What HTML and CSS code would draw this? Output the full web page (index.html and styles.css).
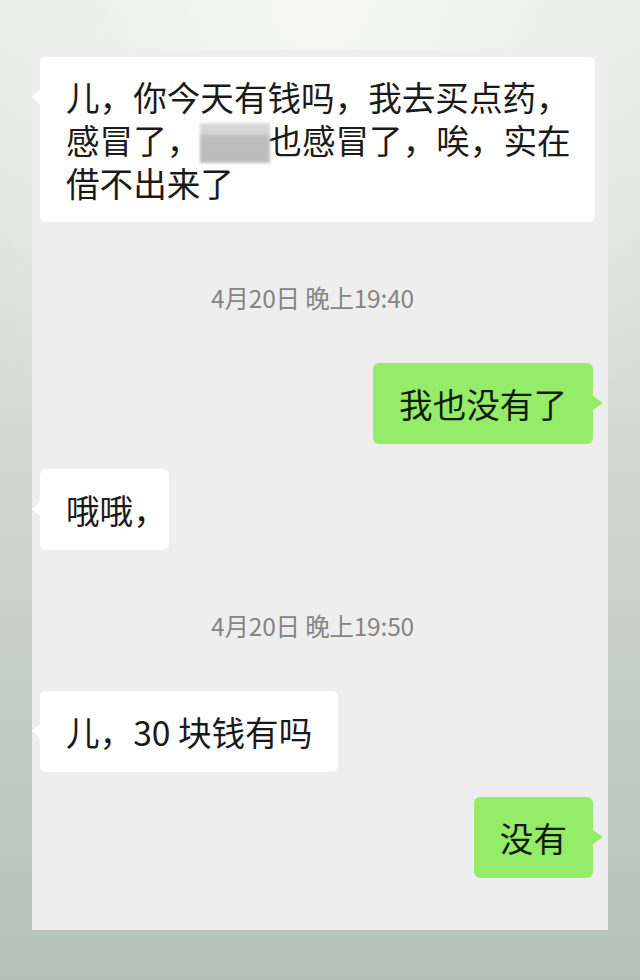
FILE: index.html
```html
<!DOCTYPE html>
<html lang="zh-CN">
<head>
<meta charset="utf-8">
<title>聊天记录</title>
<link rel="stylesheet" href="styles.css">
</head>
<body>
<div class="page">
  <div class="card">
    <div class="row left">
      <div class="bubble white long">
        <div class="line">儿，你今天有钱吗，我去买点药<span class="trim">，</span></div>
        <div class="line">感冒了，<span class="mask" aria-hidden="true"></span>也感冒了，唉，实在</div>
        <div class="line">借不出来了</div>
      </div>
    </div>
    <div class="time">4月20日 晚上19:40</div>
    <div class="row right">
      <div class="bubble green">我也没有了</div>
    </div>
    <div class="row left">
      <div class="bubble white">哦哦<span class="trim">，</span></div>
    </div>
    <div class="time">4月20日 晚上19:50</div>
    <div class="row left">
      <div class="bubble white">儿，30 块钱有吗</div>
    </div>
    <div class="row right">
      <div class="bubble green">没有</div>
    </div>
  </div>
</div>
</body>
</html>
```
FILE: styles.css
```css
html, body {
  margin: 0;
  padding: 0;
}
body {
  width: 640px;
  height: 980px;
  overflow: hidden;
  font-family: "Noto Sans CJK SC", "Noto Sans", sans-serif;
  background:
    radial-gradient(ellipse 70% 55% at 50% 0%, rgba(248,249,247,0.95) 0%, rgba(240,242,239,0.6) 50%, rgba(240,242,239,0) 100%),
    linear-gradient(180deg, #e9ece8 0%, #d1d9d2 45%, #b3c2b7 100%);
}
.page {
  padding-top: 50px;
}
.card {
  margin: 0 32px;
  width: 576px;
  height: 880px;
  box-sizing: border-box;
  background: #eeeeee;
  padding: 7px 15px 0 8px;
  display: flex;
  flex-direction: column;
}
.row {
  display: flex;
  margin-bottom: 25px;
}
.row.left { justify-content: flex-start; }
.row.right { justify-content: flex-end; }
.bubble {
  position: relative;
  font-size: 33.6px;
  line-height: 43px;
  color: #1a1a1a;
  padding: 19px 26px 19px 26px;
  border-radius: 6px;
  white-space: nowrap;
}
.bubble.long {
  width: 555px;
  box-sizing: border-box;
  padding: 18px 26px 18px 26px;
}
.line {
  height: 43px;
}
.bubble.white { background: #ffffff; }
.bubble.green { background: #95ec69; color: #0f1a0a; }
.bubble.white::before {
  content: "";
  position: absolute;
  left: -8px;
  top: 33px;
  border-style: solid;
  border-width: 7px 8px 7px 0;
  border-color: transparent #ffffff transparent transparent;
}
.bubble.green::after {
  content: "";
  position: absolute;
  right: -10px;
  top: 33px;
  border-style: solid;
  border-width: 7.5px 0 7.5px 10px;
  border-color: transparent transparent transparent #95ec69;
}
.trim {
  margin-right: -0.7em;
}
.mask {
  display: inline-block;
  width: 70px;
  height: 40px;
  vertical-align: -9px;
  background: linear-gradient(180deg, #d9d9d9 0%, #d4d4d4 28%, #bdbdbd 32%, #bcbcbc 100%);
  filter: blur(1.5px);
  margin-right: -2px;
}
.time {
  text-align: center;
  font-size: 24.5px;
  line-height: 30px;
  color: #858585;
  margin: 36px 8px 50px 0;
  letter-spacing: -0.2px;
}
```
